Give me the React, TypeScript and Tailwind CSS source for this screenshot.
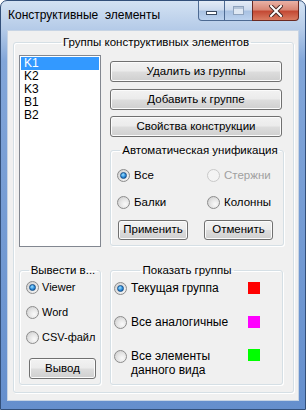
import React from 'react';

type RadioProps = {
  checked?: boolean;
  disabled?: boolean;
};

const Radio = ({ checked, disabled }: RadioProps) => (
  <span
    className={
      disabled
        ? 'flex w-[13px] h-[13px] shrink-0 items-center justify-center rounded-full border border-[#c9c9c9] bg-[#f4f4f4]'
        : 'flex w-[13px] h-[13px] shrink-0 items-center justify-center rounded-full border border-[#8c8c8c] bg-[radial-gradient(circle_at_65%_65%,#fafafa_0%,#e6e6e6_45%,#c8c8c8_100%)]'
    }
  >
    {checked && (
      <span className="w-[7px] h-[7px] rounded-full border border-[#175089] bg-[radial-gradient(circle_at_40%_35%,#9fe2ff_0%,#2a8bdc_55%,#0e4d8c_100%)]" />
    )}
  </span>
);

const WinButton = ({ label, className }: { label: string; className: string }) => (
  <div
    className={`flex items-center justify-center rounded-[3px] border border-[#707070] bg-[linear-gradient(#f2f2f2_0%,#ebebeb_48%,#dddddd_52%,#cfcfcf_100%)] shadow-[inset_0_0_0_1px_#fbfbfb] text-[11.5px] leading-none text-black whitespace-nowrap ${className}`}
  >
    {label}
  </div>
);

const GroupBox = ({
  title,
  className,
  children,
}: {
  title: string;
  className: string;
  children: React.ReactNode;
}) => (
  <fieldset
    className={`rounded-[3px] border border-[#d5dfe5] shadow-[inset_1px_1px_0_#ffffff,1px_1px_0_#ffffff] ${className}`}
  >
    <legend className="mx-auto px-[2px] text-[11.5px] leading-[13px] text-black whitespace-nowrap">{title}</legend>
    {children}
  </fieldset>
);

const items = ['K1', 'K2', 'K3', 'B1', 'B2'];

export default function App() {
  return (
    <div className="w-[306px] h-[410px] flex flex-col rounded-t-[7px] border border-[#33507a] bg-[linear-gradient(#d3e2f3_0px,#b5cbe8_28px,#82a6d9_60px,#658fcd_100%)] font-['Liberation_Sans',Arial,sans-serif]">
      {/* TITLE BAR */}
      <div className="h-[29px] flex items-start">
        <span className="ml-[7px] mt-[7px] text-[12px] leading-[15px] text-black whitespace-pre">
          Конструктивные  элементы
        </span>
        <div className="ml-auto mr-[6px] flex">
          <div className="w-[27px] h-[20px] flex items-end justify-center pb-[5px] rounded-bl-[4px] border border-t-0 border-[#4d6a92] bg-[linear-gradient(#e4ecf6_0%,#cddbee_45%,#a9c2e2_55%,#bcd2ee_100%)]">
            <span className="w-[11px] h-[4px] border border-[#3a4a60] bg-white" />
          </div>
          <div className="w-[27px] h-[20px] flex items-center justify-center border-y border-[#4d6a92] border-t-0 bg-[linear-gradient(#e4ecf6_0%,#cddbee_45%,#a9c2e2_55%,#bcd2ee_100%)]">
            <span className="w-[11px] h-[9px] border border-[#8fa3bd] bg-[#dfe8f3] shadow-[inset_0_2px_0_#b5c5d9]" />
          </div>
          <div className="w-[47px] h-[20px] flex items-center justify-center rounded-br-[4px] border border-t-0 border-[#6b2a22] bg-[linear-gradient(#eab2a6_0%,#d98876_45%,#c44a35_55%,#d97c62_100%)]">
            <svg width="14" height="12" viewBox="0 0 14 12">
              <path d="M2 1 L12 11 M12 1 L2 11" stroke="#4a2a26" strokeWidth="4" strokeLinecap="square" />
              <path d="M2 1 L12 11 M12 1 L2 11" stroke="#ffffff" strokeWidth="2" strokeLinecap="square" />
            </svg>
          </div>
        </div>
      </div>

      {/* CLIENT AREA */}
      <div className="mx-[6px] h-[371px] border border-[#c7d4e4] bg-[#f0f0f0] pl-[5px] pt-[5px]">
        <GroupBox title="Группы конструктивных элементов" className="w-[281px] h-[357px] pl-[5px] pt-[6px]">
          {/* TOP ROW */}
          <div className="flex gap-[9px]">
            <div className="w-[82px] h-[192px] border border-[#828790] bg-white p-[1px]">
              {items.map((item, i) => (
                <div
                  key={item}
                  className={`h-[13px] pl-[3px] text-[12px] leading-[13px] ${
                    i === 0 ? 'bg-[#3399ff] text-white' : 'text-black'
                  }`}
                >
                  {item}
                </div>
              ))}
            </div>
            <div className="w-[173px] flex flex-col pt-[6px]">
              <WinButton label="Удалить из группы" className="w-[172px] h-[21px]" />
              <WinButton label="Добавить к группе" className="w-[172px] h-[21px] mt-[7px]" />
              <WinButton label="Свойства конструкции" className="w-[172px] h-[21px] mt-[6px]" />
              <GroupBox title="Автоматическая унификация" className="w-[173px] h-[102px] mt-[7px] pl-[6px] pt-[12px]">
                <div className="grid grid-cols-[90px_76px] gap-y-[14px] text-[11.5px] leading-[13px]">
                  <label className="flex items-center gap-[4px] text-black">
                    <Radio checked />
                    Все
                  </label>
                  <label className="flex items-center gap-[4px] text-[#a0a0a0]">
                    <Radio disabled />
                    Стержни
                  </label>
                  <label className="flex items-center gap-[4px] text-black">
                    <Radio />
                    Балки
                  </label>
                  <label className="flex items-center gap-[4px] text-black">
                    <Radio />
                    Колонны
                  </label>
                </div>
                <div className="flex gap-[16px] mt-[11px] pl-[1px]">
                  <WinButton label="Применить" className="w-[70px] h-[20px]" />
                  <WinButton label="Отменить" className="w-[69px] h-[20px]" />
                </div>
              </GroupBox>
            </div>
          </div>

          {/* BOTTOM ROW */}
          <div className="flex gap-[9px] mt-[17px]">
            <GroupBox title="Вывести в..." className="w-[82px] h-[121px] pl-[6px] pt-[4px]">
              <div className="flex flex-col gap-[12px] text-[11px] leading-[13px] text-black whitespace-nowrap">
                <label className="flex items-center gap-[3px]">
                  <Radio checked />
                  Viewer
                </label>
                <label className="flex items-center gap-[3px]">
                  <Radio />
                  Word
                </label>
                <label className="flex items-center gap-[3px]">
                  <Radio />
                  CSV-файл
                </label>
              </div>
              <WinButton label="Вывод" className="w-[67px] h-[21px] mt-[14px] ml-[3px]" />
            </GroupBox>
            <GroupBox title="Показать группы" className="w-[173px] h-[121px] pl-[3px] pr-[22px] pt-[4px]">
              <div className="flex flex-col gap-[20px] text-[12px] leading-[14px] text-black">
                <label className="flex items-center gap-[4px]">
                  <Radio checked />
                  <span className="flex-1">Текущая группа</span>
                  <span className="w-[12px] h-[12px] bg-[#ff0000]" />
                </label>
                <label className="flex items-center gap-[4px]">
                  <Radio />
                  <span className="flex-1">Все аналогичные</span>
                  <span className="w-[12px] h-[12px] bg-[#ff00ff]" />
                </label>
                <label className="flex items-start gap-[4px]">
                  <span className="mt-[1px]">
                    <Radio />
                  </span>
                  <span className="flex-1">
                    Все элементы
                    <br />
                    данного вида
                  </span>
                  <span className="w-[12px] h-[12px] bg-[#00ff00]" />
                </label>
              </div>
            </GroupBox>
          </div>
        </GroupBox>
      </div>
    </div>
  );
}
